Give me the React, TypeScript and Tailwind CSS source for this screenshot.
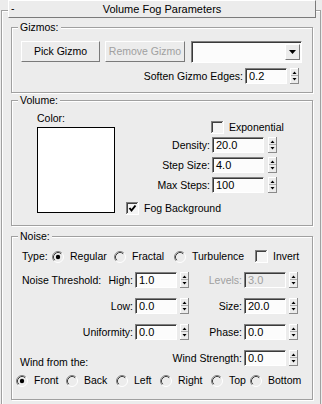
import React from "react";

const raised =
  "border border-t-white border-l-white border-r-[#7a7a7a] border-b-[#7a7a7a]";
const sunken =
  "border border-t-[#808080] border-l-[#808080] border-r-white border-b-white shadow-[inset_1px_1px_0_#3a3a3a]";

function Spinner({ className = "" }: { className?: string }) {
  return (
    <svg width="9" height="16" viewBox="0 0 9 16" className={className}>
      <rect x="0" y="0" width="9" height="16" fill="#ececec" />
      <line x1="0" y1="0.5" x2="9" y2="0.5" stroke="#fff" />
      <line x1="0.5" y1="0" x2="0.5" y2="16" stroke="#fff" />
      <line x1="8.5" y1="0" x2="8.5" y2="16" stroke="#8a8a8a" />
      <line x1="0" y1="15.5" x2="9" y2="15.5" stroke="#8a8a8a" />
      <line x1="1" y1="7.5" x2="8" y2="7.5" stroke="#b0b0b0" />
      <polygon points="2.5,6 6.5,6 4.5,3.5" fill="#000" />
      <polygon points="2.5,10 6.5,10 4.5,12.5" fill="#000" />
    </svg>
  );
}

function Input({
  value,
  w,
  disabled = false,
}: {
  value: string;
  w: string;
  disabled?: boolean;
}) {
  return (
    <div
      className={`${sunken} ${w} h-[16px] flex items-center pl-[3px] text-[11px] leading-[13px] ${
        disabled ? "bg-[#ececec] text-[#a0a0a0]" : "bg-[#fcfcfc] text-black"
      }`}
    >
      {value}
    </div>
  );
}

function Check({ checked = false }: { checked?: boolean }) {
  return (
    <svg width="13" height="13" viewBox="0 0 13 13" className="shrink-0">
      <rect x="0" y="0" width="13" height="13" fill="#f4f4f4" />
      <line x1="0" y1="0.5" x2="12" y2="0.5" stroke="#808080" />
      <line x1="0.5" y1="0" x2="0.5" y2="12" stroke="#808080" />
      <line x1="1" y1="1.5" x2="11" y2="1.5" stroke="#404040" />
      <line x1="1.5" y1="1" x2="1.5" y2="11" stroke="#404040" />
      <line x1="0" y1="12.5" x2="13" y2="12.5" stroke="#fff" />
      <line x1="12.5" y1="0" x2="12.5" y2="13" stroke="#fff" />
      {checked && (
        <polyline
          points="3.5,6 5.5,8.5 9.5,3.5"
          fill="none"
          stroke="#000"
          strokeWidth="2"
        />
      )}
    </svg>
  );
}

function Radio({ checked = false }: { checked?: boolean }) {
  return (
    <svg width="12" height="12" viewBox="0 0 12 12" className="shrink-0">
      <circle cx="6" cy="6" r="5" fill="#ececec" />
      <path d="M2.11 9.89 A5.5 5.5 0 0 1 9.89 2.11" fill="none" stroke="#808080" />
      <path d="M2.82 9.18 A4.5 4.5 0 0 1 9.18 2.82" fill="none" stroke="#404040" />
      <path d="M9.89 2.11 A5.5 5.5 0 0 1 2.11 9.89" fill="none" stroke="#fff" />
      {checked && <circle cx="6" cy="6" r="2.2" fill="#000" />}
    </svg>
  );
}

function Group({
  label,
  className,
  children,
}: {
  label: string;
  className: string;
  children: React.ReactNode;
}) {
  return (
    <div
      className={`relative ml-[9px] w-[302px] border border-[#a0a0a0] shadow-[inset_1px_1px_0_#fff,1px_1px_0_#fff] ${className}`}
    >
      <span className="absolute left-[6px] -top-[7px] px-[2px] bg-[#ececec] leading-[13px]">
        {label}
      </span>
      {children}
    </div>
  );
}

function RadioOpt({
  label,
  checked = false,
  w,
}: {
  label: string;
  checked?: boolean;
  w: string;
}) {
  return (
    <div className={`flex items-center h-[13px] ${w}`}>
      <Radio checked={checked} />
      <span className="ml-[6px] whitespace-nowrap">{label}</span>
    </div>
  );
}

function Field({
  value,
  disabled = false,
}: {
  value: string;
  disabled?: boolean;
}) {
  return (
    <>
      <div className="ml-[2px]">
        <Input value={value} w="w-[42px]" disabled={disabled} />
      </div>
      <Spinner className="ml-[3px] shrink-0" />
    </>
  );
}

export default function App() {
  return (
    <div className="w-[322px] h-[404px] bg-[#ececec] overflow-hidden pt-[10px] px-[1px] text-[10.5px] leading-[13px] text-black font-['Liberation_Sans',Arial,sans-serif]">
      <div className="h-[400px] border-t border-l border-r border-[#a0a0a0] shadow-[inset_1px_1px_0_#fff]">
        {/* Title bar */}
        <div
          className={`-mt-[11px] ml-[6px] w-[308px] h-[18px] flex items-center bg-[#ececec] ${raised}`}
        >
          <span className="w-[12px] pl-[2px] -mt-[1px]">-</span>
          <span className="flex-1 text-center text-[11px]">Volume Fog Parameters</span>
          <span className="w-[12px]" />
        </div>

        {/* Gizmos */}
        <Group label="Gizmos:" className="mt-[9px] h-[66px]">
          <div className="flex items-start pl-[9px] pt-[13px]">
            <div
              className={`${raised} w-[79px] h-[21px] flex items-center justify-center`}
            >
              Pick Gizmo
            </div>
            <div
              className={`${raised} ml-[5px] w-[80px] h-[21px] flex items-center justify-center text-[#a0a0a0]`}
            >
              Remove Gizmo
            </div>
            <div
              className={`${sunken} ml-[6px] w-[111px] h-[22px] bg-[#fcfcfc] flex items-center justify-end pr-[1px]`}
            >
              <div
                className={`${raised} w-[15px] h-[16px] bg-[#ececec] flex items-center justify-center`}
              >
                <svg width="7" height="4" viewBox="0 0 7 4">
                  <polygon points="0,0 7,0 3.5,4" fill="#000" />
                </svg>
              </div>
            </div>
          </div>
          <div className="flex items-center justify-end pr-[13px] mt-[5px] h-[16px]">
            <span>Soften Gizmo Edges:</span>
            <div className="ml-[2px]">
              <Input value="0.2" w="w-[42px]" />
            </div>
            <Spinner className="ml-[3px]" />
          </div>
        </Group>

        {/* Volume */}
        <Group label="Volume:" className="mt-[7px] h-[126px]">
          <div className="flex items-start">
            <div className="ml-[25px] pt-[11px]">
              <div className="h-[13px]">Color:</div>
              <div className="mt-[2px] w-[78px] h-[86px] border border-black bg-white" />
            </div>
            <div className="ml-[11px] pt-[20px]">
              <div className="flex items-center h-[13px] pl-[85px]">
                <Check />
                <span className="ml-[5px]">Exponential</span>
              </div>
              {[
                ["Density:", "20.0", "mt-[3px]"],
                ["Step Size:", "4.0", "mt-[4px]"],
                ["Max Steps:", "100", "mt-[4px]"],
              ].map(([l, v, m]) => (
                <div key={l} className={`flex items-center h-[16px] ${m}`}>
                  <span className="w-[84px] text-right">{l}</span>
                  <div className="ml-[2px]">
                    <Input value={v} w="w-[52px]" />
                  </div>
                  <Spinner className="ml-[4px]" />
                </div>
              ))}
              <div className="flex items-center h-[13px] mt-[9px]">
                <Check checked />
                <span className="ml-[5px]">Fog Background</span>
              </div>
            </div>
          </div>
        </Group>

        {/* Noise */}
        <Group label="Noise:" className="mt-[10px] h-[164px]">
          <div className="pl-[10px] pt-[13px]">
            <div className="flex items-center h-[13px]">
              <span className="w-[30px]">Type:</span>
              <RadioOpt label="Regular" checked w="w-[62px]" />
              <RadioOpt label="Fractal" w="w-[60px]" />
              <RadioOpt label="Turbulence" w="w-[81px]" />
              <div className="flex items-center">
                <Check />
                <span className="ml-[5px]">Invert</span>
              </div>
            </div>

            <div className="flex items-center h-[16px] mt-[9px] w-[276px]">
              <div className="w-[111px] flex justify-between">
                <span>Noise Threshold:</span>
                <span>High:</span>
              </div>
              <Field value="1.0" />
              <span className="w-[53px] text-right text-[#a0a0a0]">Levels:</span>
              <Field value="3.0" disabled />
            </div>

            <div className="flex items-center h-[16px] mt-[10px] w-[276px]">
              <span className="w-[111px] text-right">Low:</span>
              <Field value="0.0" />
              <span className="w-[53px] text-right">Size:</span>
              <Field value="20.0" />
            </div>

            <div className="flex items-center h-[16px] mt-[10px] w-[276px]">
              <span className="w-[111px] text-right">Uniformity:</span>
              <Field value="0.0" />
              <span className="w-[53px] text-right">Phase:</span>
              <Field value="0.0" />
            </div>

            <div className="flex items-start h-[19px] mt-[10px] w-[276px]">
              <span className="-ml-[2px] pt-[6px]">Wind from the:</span>
              <div className="flex-1" />
              <div className="flex items-center h-[16px]">
                <span>Wind Strength:</span>
                <Field value="0.0" />
              </div>
            </div>
          </div>

          <div className="flex items-center h-[13px] mt-[5px] pl-[4px]">
            <RadioOpt label="Front" checked w="w-[50px]" />
            <RadioOpt label="Back" w="w-[50px]" />
            <RadioOpt label="Left" w="w-[44px]" />
            <RadioOpt label="Right" w="w-[51px]" />
            <RadioOpt label="Top" w="w-[39px]" />
            <RadioOpt label="Bottom" w="w-[56px]" />
          </div>
        </Group>
      </div>
    </div>
  );
}
